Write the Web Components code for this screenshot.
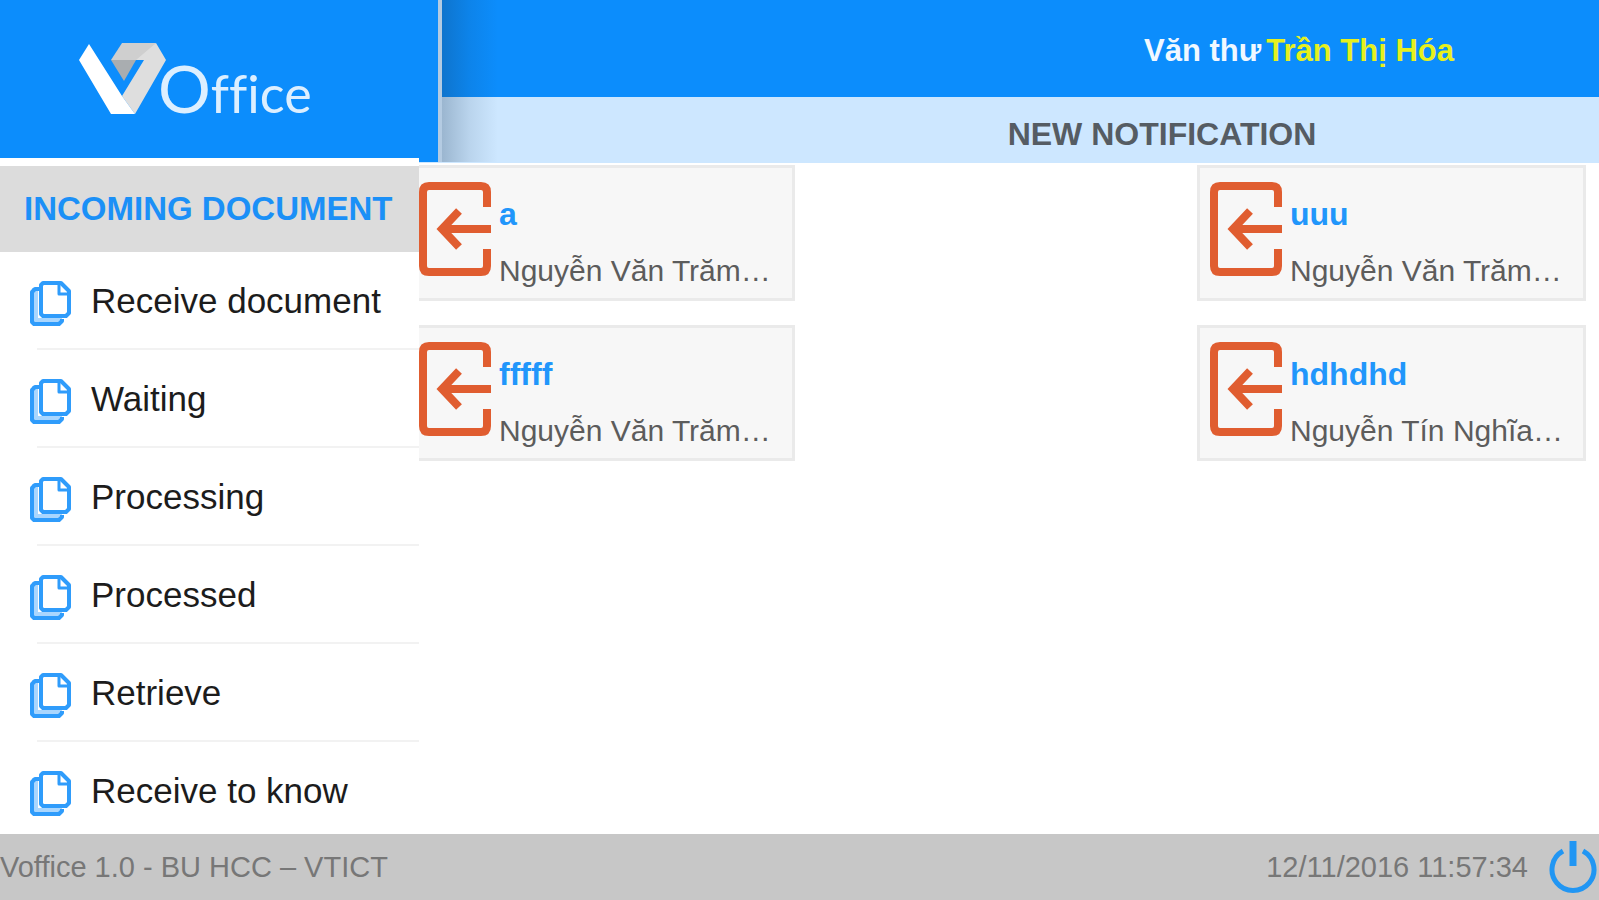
<!DOCTYPE html>
<html lang="en">
<head>
<meta charset="utf-8">
<meta name="viewport" content="width=device-width, initial-scale=1">
<title>VOffice</title>
<style>
  body { margin: 0; background: #fff; font-family: "Liberation Sans", Arial, Helvetica, sans-serif; }
</style>
</head>
<body>
<vo-app>
  <vo-sidebar slot="side" heading="INCOMING DOCUMENT">
    <vo-menu-item>Receive document</vo-menu-item>
    <vo-menu-item>Waiting</vo-menu-item>
    <vo-menu-item>Processing</vo-menu-item>
    <vo-menu-item>Processed</vo-menu-item>
    <vo-menu-item>Retrieve</vo-menu-item>
    <vo-menu-item>Receive to know</vo-menu-item>
  </vo-sidebar>
  <vo-header slot="main"><span slot="role">Văn thư</span><span slot="name">Trần Thị Hóa</span></vo-header>
  <vo-section slot="main">
    <span slot="title">NEW NOTIFICATION</span>
    <vo-card subject="a">Nguyễn Văn Trăm…</vo-card>
    <vo-card subject="uuu">Nguyễn Văn Trăm…</vo-card>
    <vo-card subject="fffff">Nguyễn Văn Trăm…</vo-card>
    <vo-card subject="hdhdhd">Nguyễn Tín Nghĩa…</vo-card>
  </vo-section>
  <vo-footer slot="foot"><span>Voffice 1.0 - BU HCC – VTICT</span><time slot="time" datetime="2016-11-12T11:57:34">12/11/2016 11:57:34</time></vo-footer>
</vo-app>
<script>
const define = (name, html, setup) => customElements.define(name, class extends HTMLElement {
  constructor() {
    super();
    this.attachShadow({ mode: 'open' }).innerHTML = html;
  }
  connectedCallback() { if (setup) setup(this, this.shadowRoot); }
});

define('vo-app', `
<style>
  :host { display: flex; flex-direction: column; height: 100vh; overflow: hidden; }
  .body { display: flex; flex: 1; min-height: 0; overflow: hidden; }
  .side { flex: none; width: 419px; position: relative; z-index: 1; }
  main { flex: 1; min-width: 0; }
</style>
<div class="body">
  <div class="side"><slot name="side"></slot></div>
  <main><slot name="main"></slot></main>
</div>
<slot name="foot"></slot>`);

define('vo-logo', `
<style>
  :host { display: flex; box-sizing: border-box; height: 162px; padding: 42px 0 0 78px;
    background: #0c8dfc; border-right: 4px solid #b4cbe2; position: relative; }
  :host::after { content: ""; position: absolute; left: calc(100% + 4px); top: 0; bottom: 0; width: 56px;
    background: linear-gradient(90deg, rgba(20,50,80,.27), rgba(20,50,80,.1) 50%, rgba(20,50,80,0)); }
  svg { width: 88px; height: 74px; flex: none; }
  span { display: block; margin-left: -8px; font-family: Lato, sans-serif; font-weight: 400; font-size: 52px; line-height: 92px;
    color: #dcefff; font-variant-ligatures: none; }
  span::first-letter { font-size: 66px; }
</style>
<svg viewBox="0 0 88 74" aria-hidden="true">
  <path d="M33 18H58L46 39Z" fill="#a9adb0"/>
  <path d="M44 1H78L66 18H33Z" fill="#cfcfcf"/>
  <path d="M78 1L88 18L57 72L44 54L66 18H58Z" fill="#dedede"/>
  <path d="M11 2L44 54L57 72H33L1 18Z" fill="#fff"/>
</svg>
<span>Office</span>`);

define('vo-sidebar', `
<style>
  :host { display: block; height: 100%; background: #fff; }
  vo-logo { width: calc(100% + 23px); margin-bottom: -4px; }
  h2 { margin: 0; position: relative; border-top: 8px solid #fff; padding: 0 24px; background: #dcdcdc; color: #1b90f7;
    font-size: 33px; line-height: 86px; white-space: nowrap; }
</style>
<vo-logo></vo-logo>
<h2></h2>
<nav><slot></slot></nav>`, (el, root) => { root.querySelector('h2').textContent = el.getAttribute('heading'); });

define('vo-menu-item', `
<style>
  :host { display: block; }
  a { display: flex; align-items: center; gap: 20px; height: 98px; padding-left: 30px; color: #1c1c1c; text-decoration: none;
    font-size: 35px; white-space: nowrap;
    background: linear-gradient(#f2f2f2, #f2f2f2) 37px 100% / 100% 2px no-repeat; }
  svg { width: 41px; height: 45px; flex: none; margin-top: 4px; }
</style>
<a href="#">
  <svg viewBox="0 0 41 45" fill="none" aria-hidden="true">
    <path d="M8 7H2V43H32V37H8Z" fill="#a9d6fe"/>
    <g stroke="#2f9cfb" stroke-width="4" stroke-linejoin="round">
      <path d="M9 8H5L2 11V41L4 43H29L32 40V38"/>
      <path d="M13 2H31L39 10V32L36 35H13L11 33V4Z" fill="#fff"/>
      <path d="M29 3V13H38" stroke-width="3"/>
    </g>
  </svg>
  <slot></slot>
</a>`);

define('vo-header', `
<style>
  :host { display: flex; justify-content: flex-end; gap: 5px; padding-right: 145px; height: 97px; background: #0c8dfc;
    color: #f0f8ff; font-size: 31px; font-weight: 700; line-height: 102px; white-space: nowrap; }
  .name { color: #e6f01e; }
</style>
<slot name="role"></slot><span class="name"><slot name="name"></slot></span>`);

define('vo-section', `
<style>
  :host { display: block; }
  h1 { margin: 0 0 2px; padding: 4px 0 0 306px; background: #cde7ff; color: #555c63; font-size: 32px;
    line-height: 66px; height: 62px; text-align: center; }
  .cards { display: grid; grid-template-columns: 389px 389px; justify-content: space-between; gap: 24px;
    margin-left: -13px; padding-right: 13px; }
</style>
<h1><slot name="title"></slot></h1>
<div class="cards"><slot></slot></div>`);

define('vo-card', `
<style>
  :host { display: flex; box-sizing: border-box; height: 136px; padding: 14px 0 0 10px; gap: 8px; background: #f7f7f7;
    border: 3px solid #eaeaea; }
  svg { width: 72px; height: 94px; flex: none; }
  h3, p { margin: 0; white-space: nowrap; line-height: 36px; }
  h3 { color: #2196fb; font-size: 32px; }
  p { margin-top: 21px; color: #5c5c5c; font-size: 30px; }
  .text { padding-top: 14px; }
</style>
<svg viewBox="0 0 72 94" fill="none" stroke="#e05d30" stroke-width="8" aria-hidden="true">
  <path d="M68 25V10Q68 4 62 4H10Q4 4 4 10V84Q4 90 10 90H62Q68 90 68 84V67"/>
  <path d="M72 47H22M40 29L23 47L40 65"/>
</svg>
<div class="text"><h3></h3><p><slot></slot></p></div>`, (el, root) => { root.querySelector('h3').textContent = el.getAttribute('subject'); });

define('vo-footer', `
<style>
  :host { display: flex; align-items: center; flex: none; height: 66px; padding-right: 2px; background: #c7c7c7;
    color: #777; font-size: 29px; white-space: nowrap; }
  .time { margin-left: auto; }
  button { margin: 0 0 0 21px; padding: 0; border: 0; background: none; display: block; }
  svg { display: block; width: 48px; height: 54px; }
</style>
<slot></slot>
<span class="time"><slot name="time"></slot></span>
<button type="button" aria-label="Log out">
  <svg viewBox="0 0 48 54" fill="none" stroke="#2196f3" stroke-width="5" aria-hidden="true">
    <path d="M14 11A21 21 0 1 0 34 11"/><path d="M24 1V26" stroke-width="7"/>
  </svg>
</button>`);
</script>
</body>
</html>
